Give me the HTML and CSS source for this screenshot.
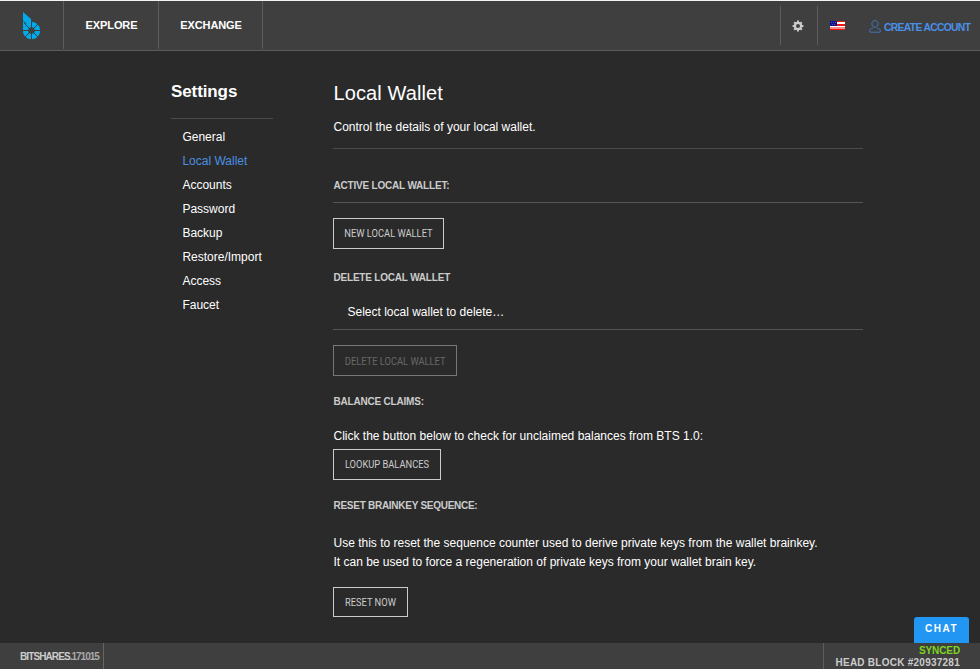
FILE: index.html
```html
<!DOCTYPE html>
<html lang="en">
<head>
<meta charset="utf-8">
<title>BitShares - Settings</title>
<link rel="stylesheet" href="styles.css">
</head>
<body>
<div class="app">
  <header class="header">
    <a class="logo"><svg width="18" height="28" viewBox="0 0 18 28">
      <circle cx="8.5" cy="18.5" r="6" fill="none" stroke="#00a9e8" stroke-width="5.4"/>
      <path fill="#00a9e8" d="M0 9L5.5 14.5L3 18H0Z"/>
      <path stroke="#3f3f3f" stroke-width="1" d="M0 18.5H18M8.5 10V28M1 11L16 26M16 11L1 26"/>
      <path fill="#00a9e8" d="M0 0L8 7V15L0 8.5Z"/>
    </svg></a>
    <a class="nav explore">EXPLORE</a>
    <a class="nav exchange">EXCHANGE</a>
    <div class="tools">
      <a class="tool gear"><svg width="12" height="12" viewBox="0 0 12 12">
        <circle cx="6" cy="6" r="3.1" fill="none" stroke="#ccc" stroke-width="2.2"/>
        <path stroke="#ccc" stroke-width="2" d="M6 .6V2.6M6 9.4V11.4M.6 6H2.6M9.4 6H11.4M2.2 2.2L3.5 3.5M8.5 8.5L9.8 9.8M9.8 2.2L8.5 3.5M3.5 8.5L2.2 9.8"/>
      </svg></a>
      <a class="tool flag"><svg width="15" height="9" viewBox="0 0 15 9">
        <path fill="#fff" d="M0 0H15V9H0Z"/>
        <path fill="#f01414" d="M0 0H15V1H0ZM0 3H15V5H0ZM0 6H15V6.6H0ZM0 7.6H15V9H0Z"/>
        <path fill="#10108e" d="M0 0H7V5H0Z"/>
        <path fill="#4d4dac" d="M1 1H2V2H1ZM3 1H4V2H3ZM5 1H6V2H5ZM2 3H3V4H2ZM4 3H5V4H4Z"/>
      </svg></a>
      <a class="account"><svg width="12" height="13" viewBox="0 0 12 13" fill="none" stroke="#4377bd">
        <path d="M6 .7C8 .7 9.1 2 9.1 3.8C9.1 5.8 7.9 7.2 6 7.2S2.9 5.8 2.9 3.8C2.9 2 4 .7 6 .7ZM3.8 8.2C2 8.3.6 9.5.6 11.2Q.6 12.2 1.5 12.2H10.5Q11.4 12.2 11.4 11.2C11.4 9.5 10 8.3 8.2 8.2"/>
      </svg><span>CREATE ACCOUNT</span></a>
    </div>
  </header>
  <main class="main">
    <aside class="side">
      <h3>Settings</h3>
      <ul>
        <li>General</li><li class="active">Local Wallet</li><li>Accounts</li><li>Password</li><li>Backup</li><li>Restore/Import</li><li>Access</li><li>Faucet</li>
      </ul>
    </aside>
    <section class="content">
      <h1>Local Wallet</h1>
      <p class="intro">Control the details of your local wallet.</p>
      <h4 class="active-label">ACTIVE LOCAL WALLET:</h4>
      <button class="btn new"><span>NEW LOCAL WALLET</span></button>
      <h4 class="delete-label">DELETE LOCAL WALLET</h4>
      <div class="select">Select local wallet to delete…</div>
      <button class="btn delete" disabled><span>DELETE LOCAL WALLET</span></button>
      <h4 class="claims-label">BALANCE CLAIMS:</h4>
      <p class="claims">Click the button below to check for unclaimed balances from BTS 1.0:</p>
      <button class="btn lookup"><span>LOOKUP BALANCES</span></button>
      <h4 class="reset-label">RESET BRAINKEY SEQUENCE:</h4>
      <p class="reset-copy">Use this to reset the sequence counter used to derive private keys from the wallet brainkey.<br>It can be used to force a regeneration of private keys from your wallet brain key.</p>
      <button class="btn reset"><span>RESET NOW</span></button>
    </section>
  </main>
  <footer class="footer">
    <div class="version"><b>BITSHARES</b><span>.171015</span></div>
    <div class="status"><div class="synced">SYNCED</div><div class="block">HEAD BLOCK #20937281</div></div>
  </footer>
  <div class="chat">CHAT</div>
</div>
</body>
</html>
```
FILE: styles.css
```css
* { box-sizing: border-box; }
body { margin: 0; background: #2a2a2a; color: #fff; font: 12px/19px "Liberation Sans", Arial, sans-serif; overflow: hidden; }
h1, h3, h4, p, ul { margin: 0; padding: 0; }
svg { display: block; flex: none; }
.app { height: 669px; display: flex; flex-direction: column; position: relative; }
.header { height: 51px; flex: none; display: flex; background: #3f3f3f; border-top: 1px solid #f0f5f4; border-bottom: 1px solid #5c5c5c; }
.logo { width: 64px; height: 48px; padding: 11px 0 0 23px; border-right: 1px solid #5c5c5c; }
.nav { height: 48px; padding-left: 1px; border-right: 1px solid #5c5c5c; font-size: 11px; line-height: 48px; font-weight: bold; text-align: center; white-space: nowrap; letter-spacing: -.1px; }
.explore { width: 95px; }
.exchange { width: 104px; }
.tools { margin-left: auto; display: flex; width: 200px; padding-top: 5px; }
.tool { flex: none; height: 39px; border-left: 1px solid #5c5c5c; display: flex; justify-content: center; }
.gear { width: 37px; padding: 14px 2px 0 0; }
.flag { width: 40px; padding-top: 15px; }
.account { flex: none; display: flex; gap: 3px; padding: 14px 0 0 12px; color: #4a90e9; font-size: 11px; line-height: 15px; font-weight: bold; white-space: nowrap; }
.account span { display: block; letter-spacing: -.7px; transform: scaleX(.935); transform-origin: left; }
.main { flex: 1; display: flex; min-height: 0; }
.side { width: 102px; margin-left: 171px; padding-top: 28px; }
.side h3 { height: 40px; font-size: 17px; line-height: 25px; letter-spacing: -.1px; border-bottom: 1px solid #4b4b4b; }
.side ul { list-style: none; padding: 6px 0 0 11px; }
.side li { height: 24px; padding-left: .4px; line-height: 24px; white-space: nowrap; }
.side .active { color: #4a90e2; }
.content { width: 530px; margin-left: 60px; padding-top: 27px; }
.content h1 { height: 40px; font-size: 20px; line-height: 30px; letter-spacing: .1px; font-weight: normal; }
.intro { height: 31px; border-bottom: 1px solid #4b4b4b; }
.content h4 { font-size: 10px; line-height: 14px; letter-spacing: -.2px; color: #ccc; font-weight: bold; white-space: nowrap; }
.content .reset-label { letter-spacing: -.27px; }
.content .active-label { height: 54px; padding-top: 30px; border-bottom: 1px solid #555; }
.btn { display: flex; align-items: center; justify-content: center; height: 31px; padding: 0 0 2px; border: 1px solid #ccc; background: none; color: #ccc; font: 11.5px Roboto, sans-serif; white-space: nowrap; }
.btn span { transform: scaleX(.81); }
.new { width: 111px; margin-top: 15px; }
.delete-label { margin-top: 22px; }
.select { height: 45px; border-bottom: 1px solid #555; }
.delete { width: 124px; margin-top: 15px; padding: 1px 0 0; border-color: #777; color: #686868; }
.claims-label { margin-top: 19px; }
.claims { margin-top: 18px; }
.lookup { width: 108px; margin-top: 3px; }
.reset-label { margin-top: 19px; }
.reset-copy { margin-top: 21px; white-space: nowrap; }
.reset { width: 75px; height: 30px; margin-top: 15px; padding: 0; }
.intro, .claims, .reset-copy, .content h4, .content h1 { padding-left: .5px; }
.content .select { padding: 18px 0 0 14.5px; }
.footer { height: 26px; flex: none; display: flex; justify-content: space-between; background: #3f3f3f; color: #ccc; }
.version { width: 104px; padding: 4px 5px 0 20px; border-right: 1px solid #666; font-size: 10px; letter-spacing: -1px; white-space: nowrap; }
.version b { letter-spacing: -.9px; }
.version span { font-weight: bold; color: #aaa; }
.status { width: 157px; padding: 2px 20px 0 0; border-left: 1px solid #5c5c5c; text-align: right; font-size: 10px; line-height: 12px; font-weight: bold; white-space: nowrap; }
.synced { color: #7ed321; letter-spacing: -.1px; }
.block { letter-spacing: .25px; }
.chat { position: absolute; right: 11px; bottom: 26px; width: 55px; height: 26px; border-radius: 3px 3px 0 0; background: #2196f3; font-size: 10px; line-height: 24px; font-weight: bold; letter-spacing: 1.5px; text-align: center; }
```
